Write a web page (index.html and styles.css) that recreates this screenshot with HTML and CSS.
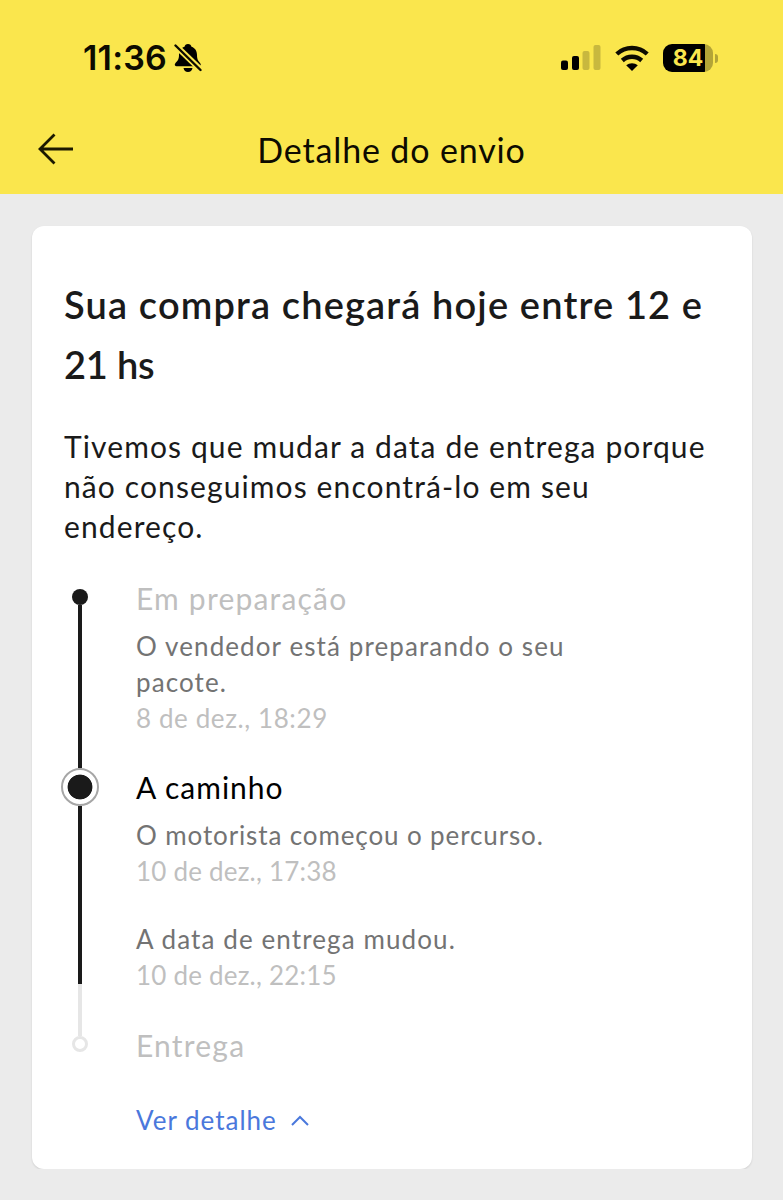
FILE: index.html
```html
<!DOCTYPE html>
<html lang="pt-BR">
<head>
    <meta charset="UTF-8">
    <meta name="viewport" content="width=device-width, initial-scale=1.0">
    <title>Detalhe do envio</title>
    <link rel="stylesheet" href="styles.css">
</head>
<body>

    <header class="header">
        <div class="status-bar">
            <div class="status-left">
                <span class="time">11:36</span>
                <svg class="bell" width="28" height="30" viewBox="0 0 28 30">
                    <path d="M14 1c2 0 3.200 1.200 3.500 2.800C21.500 5.200 23 8.500 23 12c0 5 1.500 6 3.400 8.500.8 1.200.2 2.700-1 2.700H2.500c-1.500 0-2.300-1.500-1.300-2.700C3.200 18 5 17 5 12c0-4 1.700-7 5.500-8.200C10.800 2.200 12 1 14 1zM9.500 25h9c-.5 2.500-2 4-4.500 4s-4-1.500-4.500-4z"/>
                    <path class="bell-gap" d="M1 2l26 25"/>
                    <path class="bell-slash" d="M1.500 2.500l25 24.500"/>
                </svg>
            </div>
            <div class="status-right">
                <svg width="40" height="26" viewBox="0 0 40 26">
                    <rect x="0" y="15.500" width="7" height="9.500" rx="2"/>
                    <rect x="11" y="11" width="7" height="14" rx="2"/>
                    <rect class="dim" x="21.500" y="6" width="7" height="19" rx="2"/>
                    <rect class="dim" x="32.500" y="0" width="7" height="25" rx="2"/>
                </svg>
                <svg class="wifi" width="34" height="26" viewBox="0 0 34 26">
                    <path class="wave" d="M1.800 9C10.300 1 23.700 1 32.200 9"/>
                    <path class="wave" d="M7.300 15.500c5.500-5 13.900-5 19.400 0"/>
                    <path d="M17 26l-5.800-5.700c3.200-2.800 8.400-2.800 11.600 0z"/>
                </svg>
                <div class="battery">
                    <span class="battery-level">84</span>
                    <span class="battery-tip"></span>
                </div>
            </div>
        </div>
        <div class="nav-bar">
            <svg class="back" width="36" height="32" viewBox="0 0 36 32">
                <path d="M35 16H2M16.500 1.500L2 16l14.500 14.500"/>
            </svg>
            <h1 class="nav-title">Detalhe do envio</h1>
        </div>
    </header>

    <main class="card">
        <h2 class="card-title">Sua compra chegará hoje entre 12 e<br><span class="hours">21 hs</span></h2>
        <p class="card-text">Tivemos que mudar a data de entrega porque<br>não conseguimos encontrá-lo em seu<br>endereço.</p>

        <section class="timeline">
            <div class="step step-first">
                <div class="rail">
                    <span class="dot"></span>
                    <span class="line"></span>
                </div>
                <div class="content">
                    <h3 class="step-title">Em preparação</h3>
                    <p class="detail">O vendedor está preparando o seu<br>pacote.</p>
                    <p class="date date-first">8 de dez., 18:29</p>
                </div>
            </div>

            <div class="step step-current">
                <div class="rail">
                    <span class="dot-current"></span>
                    <span class="line"></span>
                    <span class="line-pending"></span>
                </div>
                <div class="content">
                    <h3 class="step-title active">A caminho</h3>
                    <p class="detail driver">O motorista começou o percurso.</p>
                    <p class="date">10 de dez., 17:38</p>
                    <p class="detail next">A data de entrega mudou.</p>
                    <p class="date">10 de dez., 22:15</p>
                </div>
            </div>

            <div class="step step-last">
                <div class="rail">
                    <span class="line-end"></span>
                    <span class="dot-pending"></span>
                </div>
                <div class="content">
                    <h3 class="step-title">Entrega</h3>
                </div>
            </div>
        </section>

        <a class="toggle" href="#">
            <span>Ver detalhe</span>
            <svg width="18" height="11" viewBox="0 0 18 11">
                <path d="M1 10l8-8 8 8"/>
            </svg>
        </a>
    </main>

</body>
</html>
```
FILE: styles.css
```css
* {
    box-sizing: border-box;
}

body {
    font-family: Lato, "Liberation Sans", sans-serif;
    background-color: #ebebeb;
    color: #1a1a1a;
    margin: 0;
    padding: 0;
}

h1, h2, h3, p {
    margin: 0;
    font-weight: 400;
}

.header {
    height: 194px;
    background-color: #fae64d;
    color: #0d0b00;
}

.status-bar {
    display: flex;
    justify-content: space-between;
    padding: 38px 65px 0 83px;
    height: 105px;
}

.status-left,
.status-right {
    display: flex;
    align-items: center;
    height: 40px;
}

.time {
    font-family: Inter, sans-serif;
    font-size: 34px;
    font-weight: 600;
    letter-spacing: 0.2px;
    line-height: 40px;
    width: 91px;
    white-space: nowrap;
}

.bell-gap {
    stroke: #fae64d;
    stroke-width: 6;
}

.bell-slash {
    stroke: #0d0b00;
    stroke-width: 2.400;
    stroke-linecap: round;
}

.dim {
    fill: #c8b83e;
}

.wifi {
    margin: 0 14px 0 14px;
}

.wave {
    fill: none;
    stroke: #0d0b00;
    stroke-width: 4.400;
}

.battery {
    display: flex;
    align-items: center;
    gap: 2px;
}

.battery-level {
    width: 50px;
    height: 28px;
    border-radius: 9px;
    background: linear-gradient(to right, #000 42px, #b3a437 42px);
    color: #fae64d;
    font-family: Inter, sans-serif;
    font-size: 23px;
    font-weight: 700;
    line-height: 28px;
    text-align: center;
}

.battery-tip {
    width: 3px;
    height: 9px;
    border-radius: 0 4px 4px 0;
    background-color: #b3a437;
}

.nav-bar {
    display: grid;
    grid-template-columns: 36px 1fr 36px;
    align-items: center;
    padding: 0 38px;
    height: 88px;
}

.back {
    fill: none;
    stroke: #1c1900;
    stroke-width: 2.800;
}

.nav-title {
    font-size: 34px;
    letter-spacing: 0.85px;
    text-align: center;
}

.card {
    width: 720px;
    height: 943px;
    margin: 32px 0 0 32px;
    padding: 48px 32px 0;
    background-color: #fff;
    border-radius: 12px;
    box-shadow: 0 1px 2px rgba(0, 0, 0, 0.12);
}

.card-title {
    font-size: 38px;
    font-weight: 600;
    letter-spacing: 1.15px;
    line-height: 60px;
    white-space: nowrap;
}

.hours {
    letter-spacing: -0.2px;
}

.card-text {
    margin-top: 32px;
    font-size: 30px;
    letter-spacing: 1.11px;
    line-height: 40px;
    white-space: nowrap;
}

.timeline {
    margin-top: 32px;
}

.step {
    display: flex;
    gap: 40px;
}

.step-first {
    height: 190px;
}

.step-current {
    height: 258px;
}

.step-last {
    height: 76px;
}

.rail {
    display: flex;
    flex-direction: column;
    align-items: center;
    width: 32px;
}

.step-first .rail {
    padding-top: 11px;
}

.dot {
    flex: none;
    width: 16px;
    height: 16px;
    border-radius: 50%;
    background-color: #1a1a1a;
}

.line {
    flex: 1;
    width: 4px;
    background-color: #1a1a1a;
}

.line-pending {
    width: 4px;
    height: 42px;
    background-color: #e6e6e6;
}

.line-end {
    width: 4px;
    height: 10px;
    background-color: #e6e6e6;
}

.dot-current {
    flex: none;
    width: 38px;
    height: 38px;
    border: 2px solid #a6a6a6;
    border-radius: 50%;
    background: radial-gradient(circle, #1a1a1a 12px, #fff 12.800px);
}

.dot-pending {
    width: 16px;
    height: 16px;
    border: 3px solid #e6e6e6;
    border-radius: 50%;
}

.content {
    white-space: nowrap;
}

.step-title {
    margin-bottom: 10px;
    font-size: 30px;
    letter-spacing: 1.2px;
    line-height: 40px;
    color: #bfbfbf;
}

.step-current .step-title,
.step-last .step-title {
    margin-top: -1px;
}

.step-title.active {
    color: #000;
    letter-spacing: 1px;
}

.detail,
.date {
    font-size: 26px;
    letter-spacing: 1.1px;
    line-height: 36px;
    color: #737373;
}

.driver {
    letter-spacing: 0.88px;
}

.date {
    color: #bfbfbf;
    letter-spacing: 0.2px;
}

.date-first {
    letter-spacing: 0.6px;
}

.detail.next {
    margin-top: 32px;
}

.toggle {
    display: flex;
    align-items: center;
    gap: 14px;
    height: 36px;
    margin-left: 72px;
    color: #4a78dc;
    font-size: 26px;
    letter-spacing: 1px;
    text-decoration: none;
}

.toggle svg {
    fill: none;
    stroke: #4a78dc;
    stroke-width: 2;
}
```
